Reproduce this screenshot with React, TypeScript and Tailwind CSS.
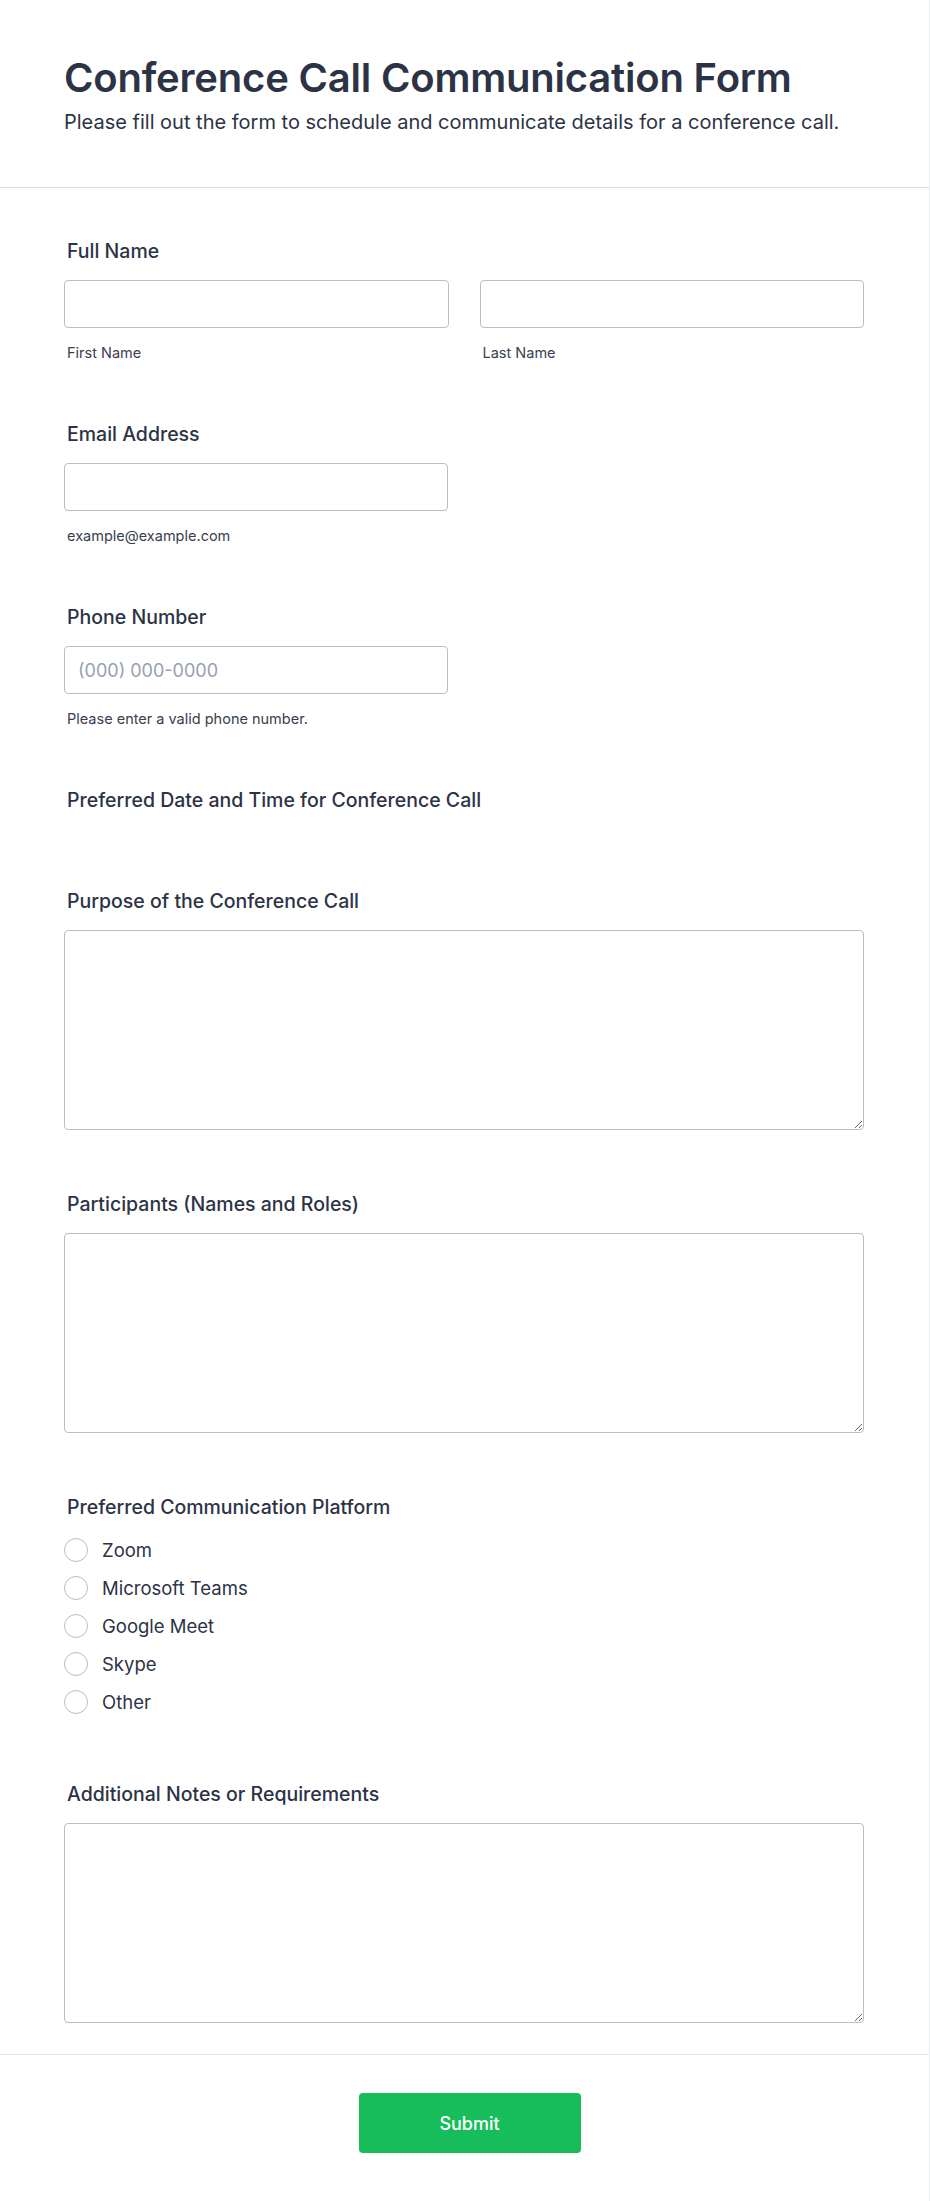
import React from 'react';

const platforms = ['Zoom', 'Microsoft Teams', 'Google Meet', 'Skype', 'Other'];

function FieldLabel({ children }: { children: React.ReactNode }) {
  return (
    <label className="block pl-[3px] text-[19.5px] leading-[28px] font-medium text-[#2c3345] mb-[15px]">
      {children}
    </label>
  );
}

function SubLabel({ children }: { children: React.ReactNode }) {
  return (
    <span className="block mt-[15px] pl-[3px] text-[14.5px] leading-[20px] text-[#39404f]">{children}</span>
  );
}

const inputClass =
  'block h-[48px] w-full rounded-[4px] border border-[#b8bdc9] bg-white px-[13px] text-[18px] text-[#2c3345] outline-none placeholder:text-[#97a0b0]';

const textareaClass =
  'block h-[200px] w-full rounded-[4px] border border-[#b8bdc9] bg-white px-[13px] py-[10px] text-[18px] text-[#2c3345] outline-none';

export default function App() {
  return (
    <div className="min-h-[2201px] w-[930px] bg-white border-r border-[#ebebf2] font-['Inter','Noto_Sans',sans-serif] text-[#2c3345]">
      {/* Header */}
      <header className="border-b border-[#dadae6] px-16 pt-[56px] pb-[51px]">
        <h1 className="text-[40px] leading-[44px] font-semibold tracking-[-0.2px] text-[#2c3345]">
          Conference Call Communication Form
        </h1>
        <p className="mt-[8px] text-[20px] leading-[28px] font-normal text-[#2c3345]">
          Please fill out the form to schedule and communicate details for a conference call.
        </p>
      </header>

      {/* Fields */}
      <main className="flex flex-col border-b border-[#e3e8ef] pl-16 pr-[65px] pt-[49px] pb-[31px]">
        {/* Full Name */}
        <div className="flex flex-col">
          <FieldLabel>Full Name</FieldLabel>
          <div className="grid grid-cols-2 gap-[31px]">
            <div>
              <input className={inputClass} />
              <SubLabel>First Name</SubLabel>
            </div>
            <div>
              <input className={inputClass} />
              <SubLabel>Last Name</SubLabel>
            </div>
          </div>
        </div>

        {/* Email */}
        <div className="mt-[57px] flex w-[384px] flex-col">
          <FieldLabel>Email Address</FieldLabel>
          <input className={inputClass} />
          <SubLabel>example@example.com</SubLabel>
        </div>

        {/* Phone */}
        <div className="mt-[57px] flex w-[384px] flex-col">
          <FieldLabel>Phone Number</FieldLabel>
          <input className={inputClass} placeholder="(000) 000-0000" />
          <SubLabel>Please enter a valid phone number.</SubLabel>
        </div>

        {/* Date and time */}
        <div className="mt-[57px] flex flex-col">
          <FieldLabel>Preferred Date and Time for Conference Call</FieldLabel>
        </div>

        {/* Purpose */}
        <div className="mt-[58px] flex flex-col">
          <FieldLabel>Purpose of the Conference Call</FieldLabel>
          <textarea className={textareaClass} />
        </div>

        {/* Participants */}
        <div className="mt-[60px] flex flex-col">
          <FieldLabel>Participants (Names and Roles)</FieldLabel>
          <textarea className={textareaClass} />
        </div>

        {/* Platform */}
        <div className="mt-[60px] flex flex-col">
          <FieldLabel>Preferred Communication Platform</FieldLabel>
          <div className="flex flex-col gap-[10px]">
            {platforms.map((p) => (
              <label key={p} className="flex h-[28px] items-center gap-[14px]">
                <span className="block h-[24px] w-[24px] rounded-full border-[1.5px] border-[#b8bdc9] bg-white" />
                <span className="text-[18.5px] leading-[28px] text-[#2c3345]">{p}</span>
              </label>
            ))}
          </div>
        </div>

        {/* Notes */}
        <div className="mt-[64px] flex flex-col">
          <FieldLabel>Additional Notes or Requirements</FieldLabel>
          <textarea className={textareaClass} />
        </div>
      </main>

      {/* Footer */}
      <footer className="flex justify-center pt-[38px] pb-[49px] pl-[10px]">
        <button className="h-[60px] w-[222px] rounded-[4px] bg-[#18bd5b] text-[18px] font-medium text-white">
          Submit
        </button>
      </footer>
    </div>
  );
}
